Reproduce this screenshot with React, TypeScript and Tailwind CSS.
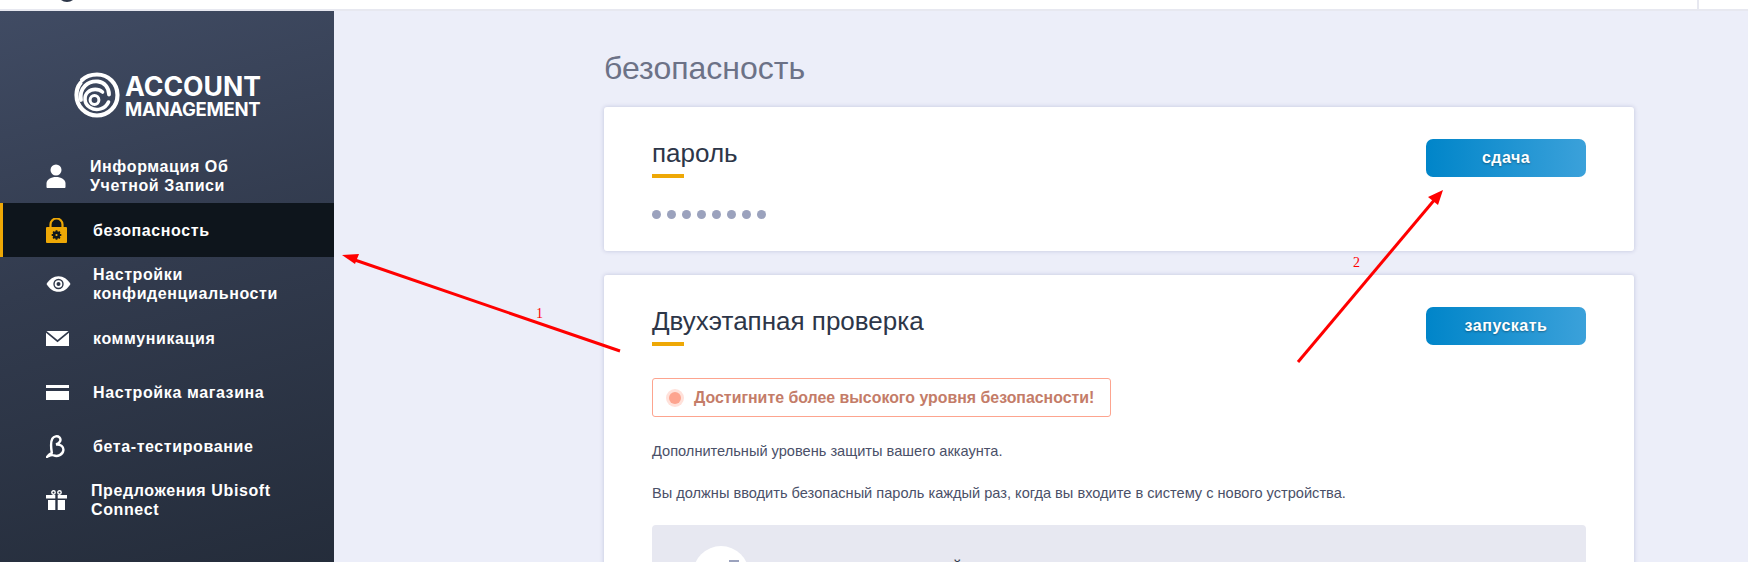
import type { ReactNode } from "react";

const sans = "font-['Liberation_Sans',Arial,sans-serif]";

function UserIcon() {
  return (
    <svg width="20" height="24" viewBox="0 0 20 24" fill="#fff">
      <circle cx="10" cy="6" r="5.5" />
      <path d="M0.5 23v-3.5C0.5 15.5 5 13 10 13s9.500 2.500 9.500 6.500V23c0 .5-.4 1-1 1h-17c-.6 0-1-.5-1-1z" />
    </svg>
  );
}

function LockIcon() {
  return (
    <svg width="21" height="25" viewBox="0 0 21 25">
      <path d="M4.500 11V6.500a6 6 0 0 1 12 0V11" fill="none" stroke="#eea806" strokeWidth="2.200" />
      <rect x="0" y="9" width="21" height="16" rx="1" fill="#eea806" />
      <circle cx="10.500" cy="17" r="2.400" fill="none" stroke="#10161d" strokeWidth="2.600" />
      <path d="M10.500 12.200v2.400M10.500 19.400v2.400M5.700 17h2.400M12.900 17h2.400M7.100 13.600l1.700 1.700M12.200 18.700l1.700 1.700M13.900 13.600l-1.700 1.700M8.800 18.700l-1.700 1.700" stroke="#10161d" strokeWidth="1.800" />
    </svg>
  );
}

function EyeIcon() {
  return (
    <svg width="25" height="16" viewBox="0 0 25 16">
      <path d="M0.500 8C3.500 3 7.500 0.200 12.500 0.200S21.500 3 24.500 8c-3 5-7 7.800-12 7.800S3.500 13 0.500 8z" fill="#fff" />
      <circle cx="12.500" cy="8" r="5.200" fill="#2e3748" />
      <circle cx="12.500" cy="8" r="3.800" fill="#fff" />
      <circle cx="12.500" cy="8" r="2" fill="#2e3748" />
    </svg>
  );
}

function MailIcon() {
  return (
    <svg width="23" height="15" viewBox="0 0 23 15" fill="#fff">
      <path d="M0.500 0h22L11.500 9z" />
      <path d="M0 1.800l11.500 9.400L23 1.800V15H0z" />
    </svg>
  );
}

function CardIcon() {
  return (
    <svg width="23" height="15" viewBox="0 0 23 15" fill="#fff">
      <rect width="23" height="3" />
      <rect y="6" width="23" height="9" />
    </svg>
  );
}

function BetaIcon() {
  return (
    <svg width="20" height="23" viewBox="0 0 19 22" fill="none" stroke="#fff" strokeWidth="2.300" strokeLinecap="round">
      <path d="M5.500 17C4.500 11 4 7 6 3.500 7.500 1 11 0.500 12.800 2.300c2 2 .8 5.500-3.300 6.800 4.500-.5 7.500 2 7 5.700-.6 4-5.500 6.200-9 4.800C5 18.500 3.500 19.800 1 21c1.200-2 2-2.800 4.500-4" />
    </svg>
  );
}

function GiftIcon() {
  return (
    <svg width="21" height="20" viewBox="0 0 21 20" fill="#fff">
      <circle cx="7.500" cy="2.500" r="1.700" fill="none" stroke="#fff" strokeWidth="1.400" />
      <circle cx="13.500" cy="2.500" r="1.700" fill="none" stroke="#fff" strokeWidth="1.400" />
      <rect y="5" width="9.300" height="3.500" />
      <rect x="11.700" y="5" width="9.300" height="3.500" />
      <rect x="2" y="10" width="7.300" height="10" />
      <rect x="11.700" y="10" width="7.300" height="10" />
    </svg>
  );
}

function SwirlLogo() {
  return (
    <svg width="46" height="46" viewBox="0 0 46 46" fill="none" stroke="#fff" strokeLinecap="round">
      <path d="M8 8C12 4 17 2.500 23 2.500c11.500 0 20.500 9 20.500 20.500S34.500 43.500 23 43.500 2.500 34.500 2.500 23C2.500 18 4 14 6.500 11" strokeWidth="4.200" />
      <path d="M7 28C5 16 14 8.500 24 9.500c6 .6 11 6 11 13" strokeWidth="3.800" />
      <path d="M34.500 30c-3 7-12 9.500-18.500 5.500C10 32 9.500 24 14 20c4-3.500 10.500-3.500 14.500 0" strokeWidth="3.600" />
      <circle cx="20.500" cy="28" r="4.400" strokeWidth="3" />
    </svg>
  );
}

type NavItem = { label: ReactNode; icon: ReactNode; textClass: string; active?: boolean };

const navItems: NavItem[] = [
  { label: <>Информация Об<br />Учетной Записи</>, icon: <UserIcon />, textClass: "ml-0" },
  { label: "безопасность", icon: <LockIcon />, textClass: "ml-[3px]", active: true },
  { label: <>Настройки<br />конфиденциальности</>, icon: <EyeIcon />, textClass: "ml-[3px]" },
  { label: "коммуникация", icon: <MailIcon />, textClass: "ml-[3px]" },
  { label: "Настройка магазина", icon: <CardIcon />, textClass: "ml-[3px]" },
  { label: "бета-тестирование", icon: <BetaIcon />, textClass: "ml-[3px]" },
  { label: <>Предложения Ubisoft<br />Connect</>, icon: <GiftIcon />, textClass: "ml-[1px]" },
];

function Sidebar() {
  return (
    <aside className="w-[334px] shrink-0 bg-[linear-gradient(165deg,#404b63_0%,#323b4e_40%,#212936_100%)]">
      <div className="flex h-[138px] items-start pl-[74px] pt-[61px]">
        <SwirlLogo />
        <div className="ml-[5px] flex flex-col font-['Inter',sans-serif] font-bold text-white">
          <span className="mt-[1px] text-[26.600px] leading-[26px]">ACCOUNT</span>
          <span className="text-[18.500px] leading-[20px] tracking-[-0.3px]">MANAGEMENT</span>
        </div>
      </div>
      <nav>
        {navItems.map((item, i) => (
          <div
            key={i}
            className={`flex h-[54px] items-center ${item.active ? "border-l-[3px] border-[#eea806] bg-[#0e151c] pl-[43px]" : "pl-[46px]"}`}
          >
            <div className="flex w-[44px] shrink-0 items-center">{item.icon}</div>
            <span className={`${item.textClass} ${sans} text-[16px] font-bold leading-[19px] tracking-[0.6px] text-white`}>
              {item.label}
            </span>
          </div>
        ))}
      </nav>
    </aside>
  );
}

function CardTitle({ children }: { children: ReactNode }) {
  return (
    <div>
      <h2 className="text-[26px] leading-[28px] text-[#2d3648]">{children}</h2>
      <div className="mt-[7px] h-[4px] w-[32px] bg-[#eea806]" />
    </div>
  );
}

function ActionButton({ children }: { children: ReactNode }) {
  return (
    <button className="h-[38px] w-[160px] rounded-[7px] bg-[linear-gradient(90deg,#0085c9,#3ba1da)] text-[16px] font-bold tracking-[0.5px] text-white [text-shadow:0_1px_2px_rgba(0,0,0,0.35)]">
      {children}
    </button>
  );
}

function Card({ children }: { children: ReactNode }) {
  return <section className="rounded-[3px] bg-white px-[48px] pt-[32px] shadow-[0_0_4px_rgba(90,100,160,0.3)]">{children}</section>;
}

export default function App() {
  return (
    <div className={`relative flex h-[562px] w-[1748px] flex-col overflow-hidden bg-[#eceef9] ${sans}`}>
      <header className="relative h-[11px] shrink-0 border-b-2 border-[#e7e8f0] bg-white">
        <div className="absolute left-[57px] top-[-18px] h-[20px] w-[20px] rounded-full bg-[#2d3648]" />
        <div className="absolute right-[49px] top-0 h-full w-[2px] bg-[#e7e8f0]" />
      </header>
      <div className="flex flex-1">
        <Sidebar />
        <main className="ml-[270px] w-[1030px] pt-[39px]">
          <h1 className="mb-[21px] text-[32px] leading-[36px] text-[#6c7287]">безопасность</h1>
          <Card>
            <div className="flex h-[112px] items-start justify-between">
              <div>
                <CardTitle>пароль</CardTitle>
                <div className="mt-[32px] flex gap-[6px]">
                  {[0, 1, 2, 3, 4, 5, 6, 7].map((i) => (
                    <span key={i} className="h-[9px] w-[9px] rounded-full bg-[#9ba2bd]" />
                  ))}
                </div>
              </div>
              <ActionButton>сдача</ActionButton>
            </div>
          </Card>
          <div className="mt-[24px]">
            <Card>
              <div className="flex items-start justify-between">
                <CardTitle>Двухэтапная проверка</CardTitle>
                <ActionButton>запускать</ActionButton>
              </div>
              <div className="mt-[32px] flex h-[39px] w-[459px] items-center rounded-[3px] border border-[#fda48f] pl-[13px]">
                <span className="flex h-[18px] w-[18px] items-center justify-center rounded-full bg-[#ffe1da]">
                  <span className="h-[12px] w-[12px] rounded-full bg-[#fda48f]" />
                </span>
                <span className="ml-[10px] text-[15.900px] font-bold text-[#c47c68]">Достигните более высокого уровня безопасности!</span>
              </div>
              <p className="mt-[24px] text-[14.600px] leading-[20px] text-[#4a5068]">Дополнительный уровень защиты вашего аккаунта.</p>
              <p className="mt-[22px] text-[14.600px] leading-[20px] text-[#4a5068]">Вы должны вводить безопасный пароль каждый раз, когда вы входите в систему с нового устройства.</p>
              <div className="mt-[22px] flex h-[120px] items-start rounded-[4px] bg-[#e7e8f1] pl-[41px] pt-[21px]">
                <div className="relative h-[56px] w-[56px] rounded-full bg-white">
                  <span className="absolute left-[36px] top-[14px] h-[2px] w-[10px] bg-[#9ba2bd]" />
                </div>
                <span className="ml-[120px] mt-[9px] text-[16px] text-[#2d3648]">двухэтапной</span>
              </div>
            </Card>
          </div>
        </main>
      </div>
      <svg className="pointer-events-none absolute inset-0" width="1748" height="562">
        <path d="M620 351L352 259" stroke="#ff0000" strokeWidth="3" />
        <path d="M342 255l17-1-4 10z" fill="#ff0000" />
        <path d="M1298 362L1436 198" stroke="#ff0000" strokeWidth="3" />
        <path d="M1443 190l-5 15-10-8z" fill="#ff0000" />
      </svg>
      <span className="absolute left-[536px] top-[306px] font-['Liberation_Serif',serif] text-[14px] leading-[16px] text-[#ff0000]">1</span>
      <span className="absolute left-[1353px] top-[255px] font-['Liberation_Serif',serif] text-[14px] leading-[16px] text-[#ff0000]">2</span>
    </div>
  );
}
